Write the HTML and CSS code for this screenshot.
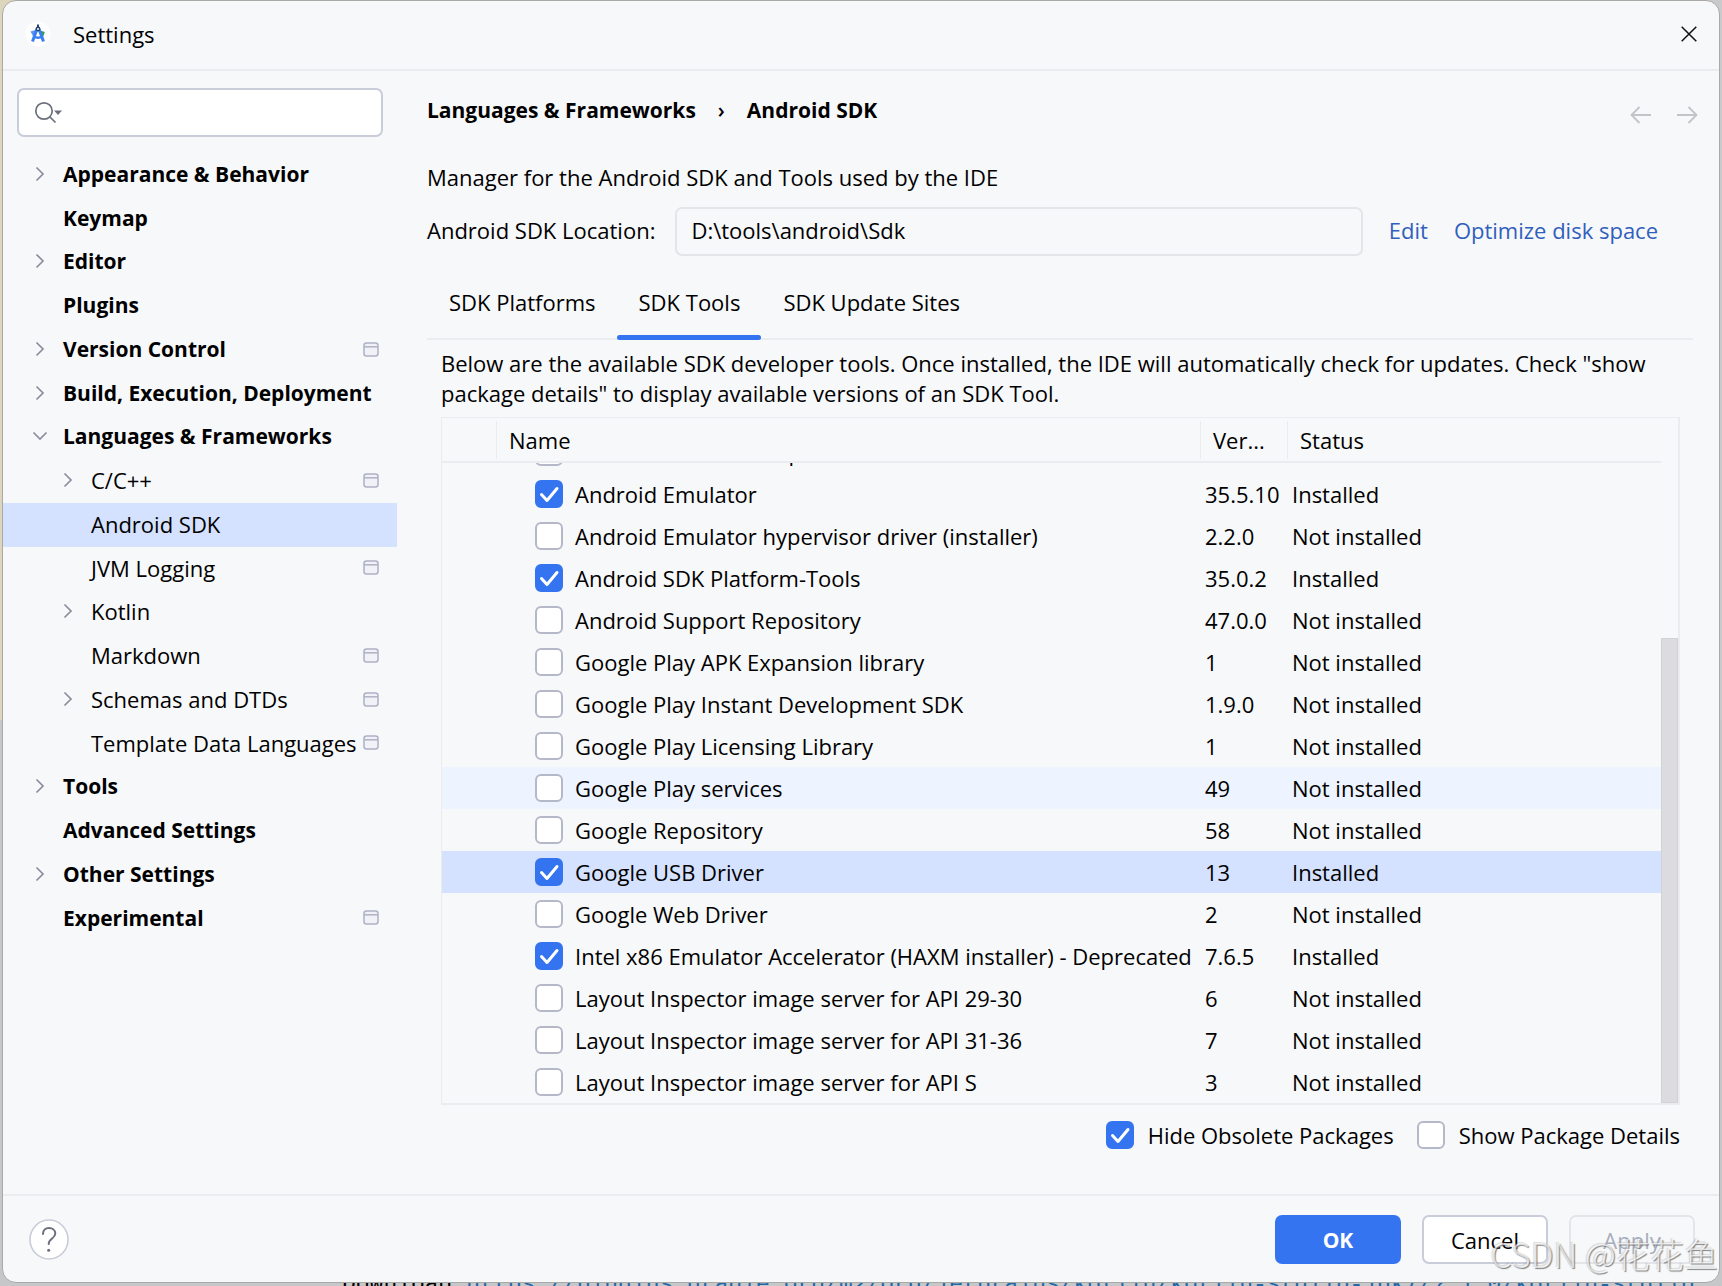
FILE: index.html
```html
<!DOCTYPE html>
<html lang="en">
<head>
<meta charset="utf-8">
<meta name="viewport" content="width=device-width, initial-scale=1">
<title>Settings</title>
<link rel="stylesheet" href="styles.css">
</head>
<body>
<svg class="sprite" aria-hidden="true">
  <symbol id="chev-right" viewBox="0 0 16 16"><path d="M4.5 1.5 11 8l-6.500 6.500" fill="none" stroke="#8a8d9e" stroke-width="1.700"/></symbol>
  <symbol id="chev-down" viewBox="0 0 16 16"><path d="M1.500 4.500 8 11l6.500-6.500" fill="none" stroke="#8a8d9e" stroke-width="1.700"/></symbol>
  <symbol id="project" viewBox="0 0 16 15"><rect x="1" y="1" width="14" height="13" rx="2.500" fill="#f1f2f7" stroke="#adb1c4" stroke-width="1.500"/><path d="M1 4.800h14" stroke="#adb1c4" stroke-width="1.500"/></symbol>
</svg>

<div class="dialog" role="dialog" aria-labelledby="dialog-title">
  <header class="titlebar">
    <svg class="logo" viewBox="0 0 26 26" aria-hidden="true">
      <circle cx="13" cy="13" r="12.500" fill="#fff"/>
      <path d="M15 9.500 19.800 11l-1.500 4.500-3 .5z" fill="#2f9e55"/>
      <path d="M5.500 10.500 10.500 9l-2 7z" fill="#5b95f5"/>
      <path d="M7.500 20.500 12.200 7.500h1.600l4.700 13" fill="none" stroke="#3b7ef2" stroke-width="3"/>
      <path d="M8.500 15.500q4.500 2.500 9 0" fill="none" stroke="#3b7ef2" stroke-width="2.400"/>
      <path d="M13 3.500v3" stroke="#26466d" stroke-width="2"/>
      <circle cx="13" cy="8" r="1.700" fill="#fff" stroke="#26466d" stroke-width="1.400"/>
    </svg>
    <h1 class="title" id="dialog-title">Settings</h1>
    <button class="icon-button close" type="button" aria-label="Close">
      <svg width="16" height="16" viewBox="0 0 16 16"><path d="M.7.7 15.300 15.300M15.300.7.7 15.300" stroke="#111" stroke-width="1.500"/></svg>
    </button>
  </header>

  <div class="main">
    <nav class="sidebar" aria-label="Settings categories">
      <div class="search">
        <svg class="search-icon" width="30" height="24" viewBox="0 0 30 24" aria-hidden="true"><circle cx="10" cy="10" r="8.200" fill="none" stroke="#6c707e" stroke-width="1.700"/><path d="m16 16 5.500 5.500" stroke="#6c707e" stroke-width="1.700"/><path d="M20 9.500h8l-4 4.500z" fill="#6c707e"/></svg>
        <input class="search-input" type="text" aria-label="Search settings">
      </div>
      <ul class="tree">
        <li class="node"><svg class="chev"><use href="#chev-right"/></svg><span class="label">Appearance &amp; Behavior</span></li>
        <li class="node"><span class="chev"></span><span class="label">Keymap</span></li>
        <li class="node"><svg class="chev"><use href="#chev-right"/></svg><span class="label">Editor</span></li>
        <li class="node"><span class="chev"></span><span class="label">Plugins</span></li>
        <li class="node"><svg class="chev"><use href="#chev-right"/></svg><span class="label">Version Control</span><svg class="scope"><use href="#project"/></svg></li>
        <li class="node"><svg class="chev"><use href="#chev-right"/></svg><span class="label">Build, Execution, Deployment</span></li>
        <li class="node"><svg class="chev"><use href="#chev-down"/></svg><span class="label">Languages &amp; Frameworks</span></li>
        <li class="node child"><svg class="chev"><use href="#chev-right"/></svg><span class="label">C/C++</span><svg class="scope"><use href="#project"/></svg></li>
        <li class="node child selected" aria-current="page"><span class="chev"></span><span class="label">Android SDK</span></li>
        <li class="node child"><span class="chev"></span><span class="label">JVM Logging</span><svg class="scope"><use href="#project"/></svg></li>
        <li class="node child"><svg class="chev"><use href="#chev-right"/></svg><span class="label">Kotlin</span></li>
        <li class="node child"><span class="chev"></span><span class="label">Markdown</span><svg class="scope"><use href="#project"/></svg></li>
        <li class="node child"><svg class="chev"><use href="#chev-right"/></svg><span class="label">Schemas and DTDs</span><svg class="scope"><use href="#project"/></svg></li>
        <li class="node child"><span class="chev"></span><span class="label">Template Data Languages</span><svg class="scope"><use href="#project"/></svg></li>
        <li class="node"><svg class="chev"><use href="#chev-right"/></svg><span class="label">Tools</span></li>
        <li class="node"><span class="chev"></span><span class="label">Advanced Settings</span></li>
        <li class="node"><svg class="chev"><use href="#chev-right"/></svg><span class="label">Other Settings</span></li>
        <li class="node"><span class="chev"></span><span class="label">Experimental</span><svg class="scope"><use href="#project"/></svg></li>
      </ul>
    </nav>

    <main class="content">
      <div class="crumb-bar">
        <h2 class="crumbs"><span>Languages &amp; Frameworks</span><span class="crumb-sep">›</span><span>Android SDK</span></h2>
        <div class="history">
          <button class="icon-button" type="button" aria-label="Back" disabled><svg width="22" height="18" viewBox="0 0 22 18"><path d="M21 9H2M9.500 1 1.500 9l8 8" fill="none" stroke="#c3c4c8" stroke-width="1.800"/></svg></button>
          <button class="icon-button" type="button" aria-label="Forward" disabled><svg width="22" height="18" viewBox="0 0 22 18"><path d="M1 9h19M12.500 1l8 8-8 8" fill="none" stroke="#c3c4c8" stroke-width="1.800"/></svg></button>
        </div>
      </div>
      <p class="intro">Manager for the Android SDK and Tools used by the IDE</p>
      <div class="location">
        <label class="location-label" for="sdk-path">Android SDK Location:</label>
        <input class="location-input" id="sdk-path" type="text" value="D:\tools\android\Sdk" readonly>
        <a class="link" href="#edit">Edit</a>
        <a class="link" href="#optimize">Optimize disk space</a>
      </div>
      <div class="tabs" role="tablist">
        <button class="tab" type="button" role="tab" aria-selected="false">SDK Platforms</button>
        <button class="tab active" type="button" role="tab" aria-selected="true">SDK Tools</button>
        <button class="tab" type="button" role="tab" aria-selected="false">SDK Update Sites</button>
      </div>
      <section class="pane">
        <p class="description">Below are the available SDK developer tools. Once installed, the IDE will automatically check for updates. Check "show package details" to display available versions of an SDK Tool.</p>
        <div class="table-frame">
          <table class="packages">
            <colgroup><col class="col-gutter"><col><col class="col-version"><col class="col-status"></colgroup>
            <thead>
              <tr><th></th><th>Name</th><th>Ver...</th><th>Status</th></tr>
            </thead>
            <tbody>
              <tr><td></td><td><div class="cut"><label class="pkg"><input class="check" type="checkbox">Android Auto Desktop Head Unit Emulator</label></div></td><td></td><td></td></tr>
              <tr><td></td><td><label class="pkg"><input class="check" type="checkbox" checked>Android Emulator</label></td><td>35.5.10</td><td>Installed</td></tr>
              <tr><td></td><td><label class="pkg"><input class="check" type="checkbox">Android Emulator hypervisor driver (installer)</label></td><td>2.2.0</td><td>Not installed</td></tr>
              <tr><td></td><td><label class="pkg"><input class="check" type="checkbox" checked>Android SDK Platform-Tools</label></td><td>35.0.2</td><td>Installed</td></tr>
              <tr><td></td><td><label class="pkg"><input class="check" type="checkbox">Android Support Repository</label></td><td>47.0.0</td><td>Not installed</td></tr>
              <tr><td></td><td><label class="pkg"><input class="check" type="checkbox">Google Play APK Expansion library</label></td><td>1</td><td>Not installed</td></tr>
              <tr><td></td><td><label class="pkg"><input class="check" type="checkbox">Google Play Instant Development SDK</label></td><td>1.9.0</td><td>Not installed</td></tr>
              <tr><td></td><td><label class="pkg"><input class="check" type="checkbox">Google Play Licensing Library</label></td><td>1</td><td>Not installed</td></tr>
              <tr class="hovered"><td></td><td><label class="pkg"><input class="check" type="checkbox">Google Play services</label></td><td>49</td><td>Not installed</td></tr>
              <tr><td></td><td><label class="pkg"><input class="check" type="checkbox">Google Repository</label></td><td>58</td><td>Not installed</td></tr>
              <tr class="selected"><td></td><td><label class="pkg"><input class="check" type="checkbox" checked>Google USB Driver</label></td><td>13</td><td>Installed</td></tr>
              <tr><td></td><td><label class="pkg"><input class="check" type="checkbox">Google Web Driver</label></td><td>2</td><td>Not installed</td></tr>
              <tr><td></td><td><label class="pkg"><input class="check" type="checkbox" checked>Intel x86 Emulator Accelerator (HAXM installer) - Deprecated</label></td><td>7.6.5</td><td>Installed</td></tr>
              <tr><td></td><td><label class="pkg"><input class="check" type="checkbox">Layout Inspector image server for API 29-30</label></td><td>6</td><td>Not installed</td></tr>
              <tr><td></td><td><label class="pkg"><input class="check" type="checkbox">Layout Inspector image server for API 31-36</label></td><td>7</td><td>Not installed</td></tr>
              <tr><td></td><td><label class="pkg"><input class="check" type="checkbox">Layout Inspector image server for API S</label></td><td>3</td><td>Not installed</td></tr>
            </tbody>
          </table>
          <div class="scrollbar" aria-hidden="true"><div class="thumb"></div></div>
        </div>
        <div class="options">
          <label class="option"><input class="check" type="checkbox" checked>Hide Obsolete Packages</label>
          <label class="option"><input class="check" type="checkbox">Show Package Details</label>
        </div>
      </section>
    </main>
  </div>

  <footer class="footer">
    <button class="help" type="button" aria-label="Help"><svg width="40" height="41" viewBox="0 0 40 41"><ellipse cx="20" cy="20.500" rx="19" ry="19.500" fill="#fff" stroke="#c9ccd9" stroke-width="1.600"/><path d="M14 15c0-3.800 2.600-6 6-6s6.300 2.200 6.300 5.600c0 5-6.600 5-6.600 10.400" fill="none" stroke="#6c707e" stroke-width="2" stroke-linecap="round"/><circle cx="19.700" cy="31.200" r="1.500" fill="#6c707e"/></svg></button>
    <div class="actions">
      <button class="button primary" type="button">OK</button>
      <button class="button" type="button">Cancel</button>
      <button class="button" type="button" disabled>Apply</button>
    </div>
  </footer>
</div>
<div class="console"><span class="console-line">Download <a class="console-link" href="#log">https://plugins.gradle.org/m2/org/jetbrains/kotlin/kotlin-stdlib-jdk7/?.1.0/kotlin-stdlib</a></span></div>
<div class="watermark">CSDN @花花鱼</div>
</body>
</html>
```
FILE: styles.css
```css
:root {
  --surface: #f7f8fa;
  --line: #ebecf0;
  --accent: #3574f0;
  --selection: #d4e2ff;
  --control-border: #c9ccd9;
}

* { box-sizing: border-box; }

body {
  position: relative;
  display: flex;
  flex-direction: column;
  min-height: 100vh;
  margin: 0;
  padding: 0 2px;
  overflow-x: hidden;
  background: linear-gradient(90deg, #ded5bd 0 50%, #c9cacb 50%) top / 100% 720px no-repeat #c6c7c8;
  color: #000;
  font: 22px/30px "Open Sans", "Noto Sans", "Noto Sans CJK SC", sans-serif;
}

h1, h2, p, ul { margin: 0; padding: 0; font-size: inherit; }
button, input { font: inherit; color: inherit; }
svg { display: block; }
.sprite { position: absolute; width: 0; height: 0; }

.dialog {
  flex: 1;
  display: flex;
  flex-direction: column;
  overflow: hidden;
  border: 1px solid #aaa9a6;
  border-radius: 14px;
  background: var(--surface);
}

/* Title bar */
.titlebar {
  display: flex;
  align-items: center;
  height: 70px;
  padding: 0 22px 2px;
  border-bottom: 2px solid var(--line);
}
.logo { width: 26px; height: 26px; margin-right: 22px; }
.title { font-weight: 400; }
.icon-button { padding: 0; border: 0; background: none; }
.close { margin-left: auto; }

.main { flex: 1; display: flex; }

/* Category tree */
.sidebar { width: 394px; flex: none; padding-top: 17px; }
.search {
  display: flex;
  align-items: center;
  height: 49px;
  margin: 0 14px;
  padding-left: 15px;
  border: 2px solid var(--control-border);
  border-radius: 7px;
  background: #fff;
}
.search-input { flex: 1; min-width: 0; border: 0; outline: 0; background: none; }
.tree {
  display: grid;
  grid-auto-rows: 44px 43px 44px 44px;
  margin-top: 16px;
  list-style: none;
}
.node {
  display: flex;
  align-items: center;
  padding: 0 18px 2px 29px;
  font-size: 21px;
  font-weight: 700;
}
.child { padding-left: 57px; font-size: 22px; font-weight: 400; }
.chev { flex: none; width: 16px; height: 16px; margin-right: 15px; }
.label { flex: 1; white-space: nowrap; }
.scope { flex: none; width: 16px; height: 15px; }
.node.selected { background: var(--selection); }

/* Page */
.content { flex: 1; min-width: 0; padding: 24px 26px 0 30px; }
.crumb-bar { display: flex; justify-content: space-between; height: 30px; }
.crumbs { display: flex; gap: 22px; font-size: 21px; font-weight: 700; }
.crumb-sep { font-weight: 600; }
.history { display: flex; align-items: center; gap: 24px; margin: 10px -5px 0 0; }
.intro { margin-top: 37px; }
.location { display: flex; align-items: center; gap: 26px; margin-top: 15px; padding-right: 35px; }
.location-label { margin-right: -6px; }
.location-label, .link { padding-bottom: 3px; }
.location-input {
  flex: 1;
  min-width: 0;
  height: 49px;
  padding: 0 14px 3px;
  border: 2px solid #e4e5e9;
  border-radius: 7px;
  background: transparent;
}
.link { color: #315fbd; text-decoration: none; white-space: nowrap; }

.tabs { display: flex; margin-top: 14px; box-shadow: inset 0 -2px var(--line); }
.tab {
  position: relative;
  padding: 17px 21px 23px 22px;
  border: 0;
  background: none;
  white-space: nowrap;
}
.tab.active::after {
  content: "";
  position: absolute;
  inset: auto 0 0;
  height: 5px;
  border-radius: 3px;
  background: var(--accent);
}

.pane { padding: 8px 13px 0 14px; }
.table-frame {
  display: flex;
  margin-top: 9px;
  border: 1px solid var(--line);
  border-width: 1px 2px 2px 1px;
}
.packages { flex: 1; width: 0; table-layout: fixed; border-spacing: 0; }
.col-gutter { width: 54px; }
.col-version { width: 87px; }
.col-status { width: 374px; }
.packages th {
  height: 45px;
  padding: 0 13px;
  border-bottom: 2px solid var(--line);
  background: linear-gradient(var(--line), var(--line)) 0 3px / 1px 38px no-repeat;
  font-weight: 400;
  text-align: left;
}
.packages th:first-child { background: none; }
.packages td { padding: 0 5px; white-space: nowrap; }
.packages td:nth-child(2) { padding: 0 0 0 39px; }
.pkg { display: flex; align-items: center; gap: 12px; height: 42px; }
.hovered td { background: #edf3ff; }
.packages .selected td { background: var(--selection); }

/* Row partly scrolled under the header */
.cut { display: flex; align-items: flex-end; height: 10px; overflow: hidden; }
.cut .pkg { flex: none; }

.check {
  appearance: none;
  flex: none;
  width: 28px;
  height: 28px;
  margin: 0;
  border: 2px solid #b4b8c9;
  border-radius: 6px;
  background: #fff;
}
.check:checked {
  border-color: var(--accent);
  background: var(--accent) url("data:image/svg+xml,%3Csvg xmlns='http://www.w3.org/2000/svg' viewBox='0 0 24 24'%3E%3Cpath d='M4.500 12.500l5.500 6L20 6.500' fill='none' stroke='white' stroke-width='3' stroke-linecap='round' stroke-linejoin='round'/%3E%3C/svg%3E") center / 24px no-repeat;
}

.scrollbar { display: flex; align-items: flex-end; width: 17px; }
.thumb { width: 17px; height: 465px; border: 1px solid #d2d2d4; background: #dcdcde; }

.options { display: flex; justify-content: flex-end; gap: 23px; margin-top: 15px; }
.option { display: flex; align-items: center; gap: 14px; }

/* Button bar */
.footer {
  display: flex;
  align-items: center;
  justify-content: space-between;
  padding: 19px 24px 18px 26px;
  border-top: 2px solid var(--line);
}
.help { padding: 0; border: 0; background: none; }
.actions { display: flex; gap: 21px; }
.button {
  width: 126px;
  height: 49px;
  padding: 0;
  border: 2px solid var(--control-border);
  border-radius: 7px;
  background: #fff;
}
.button.primary { border-color: var(--accent); background: var(--accent); color: #fff; font-size: 21px; font-weight: 700; }
.button:disabled { border-color: #e4e5e9; background: none; color: #a8adbd; }

/* Build output behind the dialog */
.console {
  display: flex;
  align-items: center;
  height: 3px;
  padding-left: 340px;
  overflow: hidden;
  font: 23px/24px "Liberation Mono", monospace;
}
.console-line { flex: none; white-space: nowrap; }
.console-link { color: #2268a8; text-decoration: none; }

.watermark {
  position: absolute;
  right: 4px;
  bottom: 12px;
  color: rgba(255, 255, 255, 0.7);
  font: 300 34px/40px "Noto Sans CJK SC", sans-serif;
  text-shadow: 1px 1px 1px rgba(90, 90, 90, 0.75), -1px -1px 1px rgba(120, 120, 120, 0.25);
  white-space: nowrap;
  pointer-events: none;
}
```
